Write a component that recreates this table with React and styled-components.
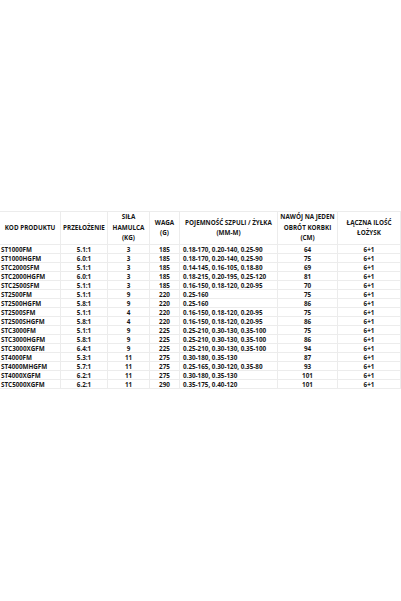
import React from 'react';
import styled, { createGlobalStyle } from 'styled-components';

const GlobalStyle = createGlobalStyle`
    html, body {
        margin: 0;
        padding: 0;
        background: #ffffff;
    }
    body {
        font-family: "Open Sans", "Liberation Sans", sans-serif;
    }
`;

const headers = [
    ['KOD PRODUKTU'],
    ['PRZEŁOŻENIE'],
    ['SIŁA', 'HAMULCA', '(KG)'],
    ['WAGA', '(G)'],
    ['POJEMNOŚĆ SZPULI / ŻYŁKA', '(MM-M)'],
    ['NAWÓJ NA JEDEN', 'OBRÓT KORBKI', '(CM)'],
    ['ŁĄCZNA ILOŚĆ', 'ŁOŻYSK'],
];

const rows = [
    ['ST1000FM', '5.1:1', '3', '185', '0.18-170, 0.20-140, 0.25-90', '64', '6+1'],
    ['ST1000HGFM', '6.0:1', '3', '185', '0.18-170, 0.20-140, 0.25-90', '75', '6+1'],
    ['STC2000SFM', '5.1:1', '3', '185', '0.14-145, 0.16-105, 0.18-80', '69', '6+1'],
    ['STC2000HGFM', '6.0:1', '3', '185', '0.18-215, 0.20-195, 0.25-120', '81', '6+1'],
    ['STC2500SFM', '5.1:1', '3', '185', '0.16-150, 0.18-120, 0.20-95', '70', '6+1'],
    ['ST2500FM', '5.1:1', '9', '220', '0.25-160', '75', '6+1'],
    ['ST2500HGFM', '5.8:1', '9', '220', '0.25-160', '86', '6+1'],
    ['ST2500SFM', '5.1:1', '4', '220', '0.16-150, 0.18-120, 0.20-95', '75', '6+1'],
    ['ST2500SHGFM', '5.8:1', '4', '220', '0.16-150, 0.18-120, 0.20-95', '86', '6+1'],
    ['STC3000FM', '5.1:1', '9', '225', '0.25-210, 0.30-130, 0.35-100', '75', '6+1'],
    ['STC3000HGFM', '5.8:1', '9', '225', '0.25-210, 0.30-130, 0.35-100', '86', '6+1'],
    ['STC3000XGFM', '6.4:1', '9', '225', '0.25-210, 0.30-130, 0.35-100', '94', '6+1'],
    ['ST4000FM', '5.3:1', '11', '275', '0.30-180, 0.35-130', '87', '6+1'],
    ['ST4000MHGFM', '5.7:1', '11', '275', '0.25-165, 0.30-120, 0.35-80', '93', '6+1'],
    ['ST4000XGFM', '6.2:1', '11', '275', '0.30-180, 0.35-130', '101', '6+1'],
    ['STC5000XGFM', '6.2:1', '11', '290', '0.35-175, 0.40-120', '101', '6+1'],
];

// column 0 and 4 are left aligned, the rest centered
const alignFor = (i) => (i === 0 || i === 4 ? 'left' : 'center');

const App = () => {
    return (
        <Page>
            <GlobalStyle />
            <Sheet>
                {headers.map((lines, i) => (
                    <HeadCell key={'h' + i}>
                        {lines.map((l, j) => <HeadLine key={j}>{l}</HeadLine>)}
                    </HeadCell>
                ))}
                {rows.map((row, r) =>
                    row.map((value, i) => (
                        <Cell key={r + '-' + i} align={alignFor(i)} $first={i === 0} $wide={i === 4}>
                            {value}
                        </Cell>
                    ))
                )}
            </Sheet>
        </Page>
    );
};

export default App;


const Page = styled.div`
    width: 401px;
    height: 601px;
    padding-top: 211px;
    box-sizing: border-box;
    overflow: hidden;
`;

const Sheet = styled.div`
    display: grid;
    grid-template-columns: 61px 47px 42px 30px 98px 60px 63px;
    grid-template-rows: 33px repeat(16, 9px);
    border-top: 1px solid #ececec;
    color: #161616;
    font-weight: 700;
    font-size: 6.3px;
`;

const HeadCell = styled.div`
    display: flex;
    flex-direction: column;
    align-items: center;
    justify-content: center;
    text-align: center;
    border-right: 1px solid #ececec;
    border-bottom: 1px solid #ececec;
    line-height: 10.5px;
    white-space: nowrap;
    overflow: hidden;
`;

const HeadLine = styled.span`
    display: block;
`;

const Cell = styled.div`
    display: flex;
    align-items: center;
    justify-content: ${props => (props.align === 'left' ? 'flex-start' : 'center')};
    padding-left: ${props => (props.$first ? '1px' : props.$wide ? '3px' : '0')};
    border-right: 1px solid #ececec;
    border-bottom: 1px solid #ececec;
    white-space: nowrap;
    overflow: hidden;
    line-height: 9px;
`;
